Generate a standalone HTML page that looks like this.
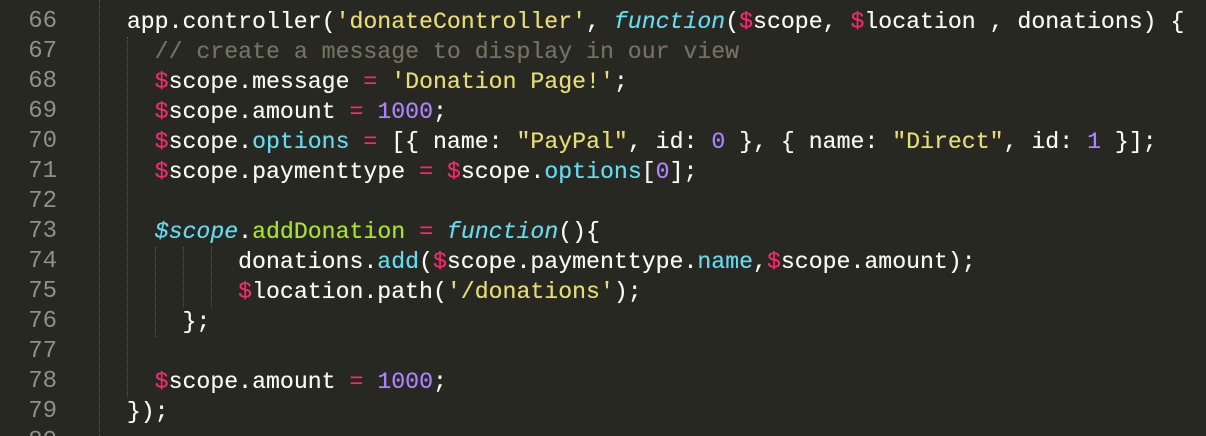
<!DOCTYPE html>
<html><head><meta charset="utf-8"><style>
html,body{margin:0;padding:0;background:#272822;width:1206px;height:436px;overflow:hidden}
.wrap{position:relative;width:1206px;height:436px}
.ln{position:absolute;left:0;width:57px;text-align:right;color:#90908a;font:24px/30px "Liberation Mono",monospace;top:-23px}
.code{position:absolute;left:99px;top:-23px;color:#f8f8f2;font:23.2px/30px "Liberation Mono",monospace;white-space:pre;margin:0;text-shadow:0 0 0.4px currentColor}
.g{position:absolute;width:0;border-left:1px dotted #55564f}
.p{color:#f92672}.s{color:#e6db74}.n{color:#ae81ff}.c{color:#66d9ef}.i{color:#66d9ef;font-style:italic}.gr{color:#a6e22e}.cm{color:#75715e}
</style></head><body><div class="wrap">
<div class="g" style="left:99px;top:0;height:436px"></div>
<div class="g" style="left:127px;top:37px;height:360px"></div>
<div class="g" style="left:155px;top:247px;height:90px"></div>
<div class="g" style="left:183px;top:247px;height:60px"></div>
<div class="g" style="left:211px;top:247px;height:60px"></div>
<div class="ln">65<br>66<br>67<br>68<br>69<br>70<br>71<br>72<br>73<br>74<br>75<br>76<br>77<br>78<br>79<br>80</div>
<pre class="code">

  app.controller(<span class="s">'donateController'</span>, <span class="i">function</span>(<span class="p">$</span>scope, <span class="p">$</span>location , donations) {
    <span class="cm">// create a message to display in our view</span>
    <span class="p">$</span>scope.message <span class="p">=</span> <span class="s">'Donation Page!'</span>;
    <span class="p">$</span>scope.amount <span class="p">=</span> <span class="n">1000</span>;
    <span class="p">$</span>scope.<span class="c">options</span> <span class="p">=</span> [{ name: <span class="s">"PayPal"</span>, id: <span class="n">0</span> }, { name: <span class="s">"Direct"</span>, id: <span class="n">1</span> }];
    <span class="p">$</span>scope.paymenttype <span class="p">=</span> <span class="p">$</span>scope.<span class="c">options</span>[<span class="n">0</span>];

    <span class="i">$scope</span>.<span class="gr">addDonation</span> <span class="p">=</span> <span class="i">function</span>(){
          donations.<span class="c">add</span>(<span class="p">$</span>scope.paymenttype.<span class="c">name</span>,<span class="p">$</span>scope.amount);
          <span class="p">$</span>location.path(<span class="s">'/donations'</span>);
      };

    <span class="p">$</span>scope.amount <span class="p">=</span> <span class="n">1000</span>;
  });
</pre>
</div></body></html>
